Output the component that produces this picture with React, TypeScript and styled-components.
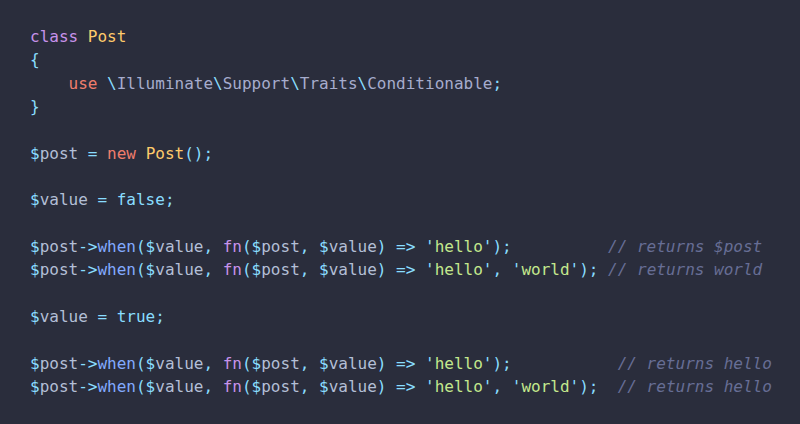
import React from "react";
import styled, { createGlobalStyle } from "styled-components";

const Global = createGlobalStyle`
  html, body { margin: 0; padding: 0; background: #2a2d3c; }
  body { width: 800px; height: 424px; overflow: hidden; }
`;

const Page = styled.div`
  width: 800px;
  height: 424px;
  box-sizing: border-box;
  padding: 25px 0 0 30px;
  background: #2a2d3c;
`;

const Code = styled.pre`
  margin: 0;
  font-family: "DejaVu Sans Mono", "Liberation Mono", monospace;
  font-size: 16px;
  line-height: 23.35px;
  color: #a6accd;
  white-space: pre;
`;

const Line = styled.div`
  height: 23.35px;
`;

type Kind =
  | "kw"
  | "cls"
  | "punc"
  | "storage"
  | "var"
  | "dollar"
  | "fn"
  | "call"
  | "str"
  | "const"
  | "plain"
  | "comment";

const colors: Record<Kind, string> = {
  kw: "#c792ea",
  cls: "#ffcb6b",
  punc: "#89ddff",
  storage: "#f07d6c",
  var: "#b3bfd6",
  dollar: "#89ddff",
  fn: "#c792ea",
  call: "#82aaff",
  str: "#c3e88d",
  const: "#89ddff",
  plain: "#a6accd",
  comment: "#676e95",
};

const Tok = styled.span<{ $k: Kind }>`
  color: ${(p) => colors[p.$k]};
  font-style: ${(p) => (p.$k === "comment" ? "italic" : "normal")};
`;

type T = [Kind, string];

const v = (name: string): T[] => [
  ["dollar", "$"],
  ["var", name],
];

const whenLine = (args: T[], pad: string, comment: string): T[] => [
  ...v("post"),
  ["punc", "->"],
  ["call", "when"],
  ["punc", "("],
  ...v("value"),
  ["punc", ", "],
  ["fn", "fn"],
  ["punc", "("],
  ...v("post"),
  ["punc", ", "],
  ...v("value"),
  ["punc", ") => "],
  ...args,
  ["punc", ");"],
  ["plain", pad],
  ["comment", comment],
];

const hello: T[] = [
  ["punc", "'"],
  ["str", "hello"],
  ["punc", "'"],
];
const world: T[] = [
  ["punc", "'"],
  ["str", "world"],
  ["punc", "'"],
];

const lines: T[][] = [
  [
    ["kw", "class"],
    ["plain", " "],
    ["cls", "Post"],
  ],
  [["punc", "{"]],
  [
    ["plain", "    "],
    ["storage", "use"],
    ["plain", " "],
    ["punc", "\\"],
    ["plain", "Illuminate"],
    ["punc", "\\"],
    ["plain", "Support"],
    ["punc", "\\"],
    ["plain", "Traits"],
    ["punc", "\\"],
    ["plain", "Conditionable"],
    ["punc", ";"],
  ],
  [["punc", "}"]],
  [],
  [
    ...v("post"),
    ["punc", " = "],
    ["storage", "new"],
    ["plain", " "],
    ["cls", "Post"],
    ["punc", "();"],
  ],
  [],
  [
    ...v("value"),
    ["punc", " = "],
    ["const", "false"],
    ["punc", ";"],
  ],
  [],
  whenLine(hello, "          ", "// returns $post"),
  whenLine([...hello, ["punc", ", "], ...world], " ", "// returns world"),
  [],
  [
    ...v("value"),
    ["punc", " = "],
    ["const", "true"],
    ["punc", ";"],
  ],
  [],
  whenLine(hello, "           ", "// returns hello"),
  whenLine([...hello, ["punc", ", "], ...world], "  ", "// returns hello"),
];

export default function App() {
  return (
    <>
      <Global />
      <Page>
        <Code>
          {lines.map((toks, i) => (
            <Line key={i}>
              {toks.map(([k, t], j) => (
                <Tok key={j} $k={k}>
                  {t}
                </Tok>
              ))}
            </Line>
          ))}
        </Code>
      </Page>
    </>
  );
}
